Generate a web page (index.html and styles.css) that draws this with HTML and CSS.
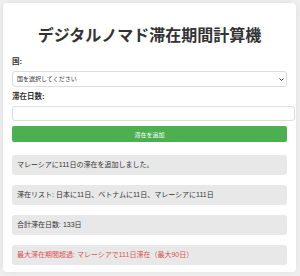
FILE: index.html
```html
<!DOCTYPE html>
<html lang="ja">
<head>
    <meta charset="UTF-8">
    <meta name="viewport" content="width=device-width, initial-scale=1.0">
    <title>デジタルノマド滞在期間計算機</title>
    <link rel="stylesheet" href="styles.css">
</head>
<body>
    <div class="container">
        <h1>デジタルノマド滞在期間計算機</h1>
        <label for="country">国:</label>
        <div class="select-wrap">
            <select id="country">
                <option value="">国を選択してください</option>
                <option value="japan">日本</option>
                <option value="vietnam">ベトナム</option>
                <option value="malaysia">マレーシア</option>
            </select>
            <svg class="arrow" width="5" height="3" viewBox="0 0 5 3"><path d="M0.5 0.5 L2.5 2.5 L4.5 0.5" fill="none" stroke="#333" stroke-width="1"/></svg>
        </div>
        <label for="days">滞在日数:</label>
        <input type="number" id="days">
        <button id="addStay">滞在を追加</button>
        <div class="result">マレーシアに111日の滞在を追加しました。</div>
        <div class="result">滞在リスト: 日本に11日、ベトナムに11日、マレーシアに111日</div>
        <div class="result">合計滞在日数: 133日</div>
        <div class="result warning">最大滞在期間超過: マレーシアで111日滞在（最大90日）</div>
    </div>
</body>
</html>
```

FILE: styles.css
```css
body {
    font-family: "Liberation Sans", Arial, "Noto Sans CJK JP", sans-serif;
    margin: 0;
    padding: 3px 4px 6px 3px;
    background-color: #f0f0f0;
    color: #333;
}
.container {
    background-color: #fff;
    padding: 9px 9px 7px;
    border-radius: 4px;
    box-shadow: 0 0 8px rgba(0, 0, 0, 0.08);
}
h1 {
    font-size: 16px;
    line-height: 18px;
    text-align: center;
    color: #333;
    margin: 15px 0 12px;
}
label {
    display: block;
    font-size: 7.5px;
    line-height: 10px;
    font-weight: bold;
    margin-bottom: 4px;
}
.select-wrap {
    position: relative;
    margin-bottom: 5px;
}
select {
    display: block;
    width: 100%;
    height: 16px;
    font-size: 6px;
    padding: 0 4px;
    border: 1px solid #ddd;
    border-radius: 3px;
    background-color: #fff;
    color: #333;
    font-family: inherit;
    appearance: none;
    -webkit-appearance: none;
}
.arrow {
    position: absolute;
    right: 3px;
    top: 7px;
}
input {
    display: block;
    width: 100%;
    height: 7px;
    padding: 3px;
    border: 1px solid #ddd;
    border-radius: 3px;
    margin-bottom: 5px;
}
button {
    display: block;
    width: 100%;
    height: 16px;
    background-color: #4CAF50;
    color: #fff;
    border: none;
    border-radius: 2px;
    font-size: 6px;
    font-family: inherit;
    cursor: pointer;
    margin-bottom: 13px;
}
.result {
    background-color: #e8e8e8;
    border-radius: 3px;
    padding: 0 5px;
    height: 20px;
    line-height: 20px;
    font-size: 7px;
    margin-bottom: 10px;
}
.result:last-child {
    margin-bottom: 0;
}
.warning {
    color: #d9534f;
}
```
